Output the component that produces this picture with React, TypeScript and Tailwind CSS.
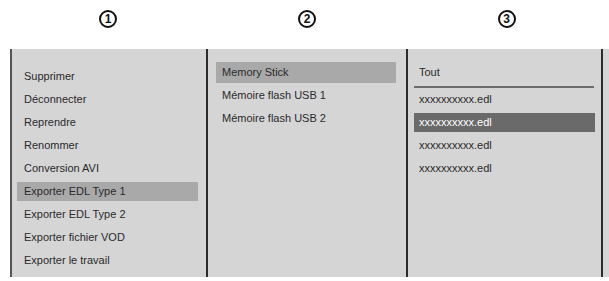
const left = [
  'Supprimer',
  'Déconnecter',
  'Reprendre',
  'Renommer',
  'Conversion AVI',
  'Exporter EDL Type 1',
  'Exporter EDL Type 2',
  'Exporter fichier VOD',
  'Exporter le travail',
]

const middle = ['Memory Stick', 'Mémoire flash USB 1', 'Mémoire flash USB 2']

const files = ['xxxxxxxxxx.edl', 'xxxxxxxxxx.edl', 'xxxxxxxxxx.edl', 'xxxxxxxxxx.edl']

function Num({ n }: { n: number }) {
  return (
    <div className="flex h-[18px] w-[18px] items-center justify-center rounded-full border-[2px] border-[#111] text-[12px] font-bold leading-none text-[#111]">
      {n}
    </div>
  )
}

export default function App() {
  return (
    <div className="h-[281px] w-[609px] bg-white font-['Liberation_Sans',Arial,sans-serif] text-[11px] text-[#2a2a2a]">
      <div className="ml-[10px] flex h-[49px] pt-[10px]">
        <div className="flex w-[196px] justify-center">
          <Num n={1} />
        </div>
        <div className="flex w-[202px] justify-center">
          <Num n={2} />
        </div>
        <div className="flex w-[197px] justify-center">
          <Num n={3} />
        </div>
      </div>

      <div className="ml-[10px] flex h-[228px] bg-[#d5d5d6]">
        <div className="w-[198px] border-r-2 border-l-2 border-r-[#2b2b2b] border-l-[#555] pt-[16px]">
          {left.map((t, i) => (
            <div key={t} className="flex h-[23px] items-center">
              <div
                className={`ml-[5px] mr-[8px] flex flex-1 items-center pl-[7px] ${
                  i === 5 ? 'h-[19px] bg-[#a9a9aa]' : ''
                }`}
              >
                {t}
              </div>
            </div>
          ))}
        </div>

        <div className="w-[200px] border-r-2 border-[#2b2b2b] pt-[12px]">
          {middle.map((t, i) => (
            <div key={t} className="flex h-[23px] items-center">
              <div
                className={`ml-[8px] flex w-[180px] items-center pl-[6px] ${
                  i === 0 ? 'h-[21px] bg-[#a9a9aa]' : ''
                }`}
              >
                {t}
              </div>
            </div>
          ))}
        </div>

        <div className="w-[195px] border-r-2 border-[#2b2b2b] pt-[12px]">
          <div className="flex h-[23px] items-center pl-[11px]">Tout</div>
          <div className="ml-[6px] mt-[2px] h-[2px] w-[180px] bg-[#6b6b6b]" />
          {files.map((t, i) => (
            <div key={i} className="flex h-[23px] items-center">
              <div
                className={`ml-[6px] flex w-[181px] items-center pl-[5px] ${
                  i === 1 ? 'h-[19px] bg-[#6a6a6a] text-white' : ''
                }`}
              >
                {t}
              </div>
            </div>
          ))}
        </div>
      </div>
    </div>
  )
}
